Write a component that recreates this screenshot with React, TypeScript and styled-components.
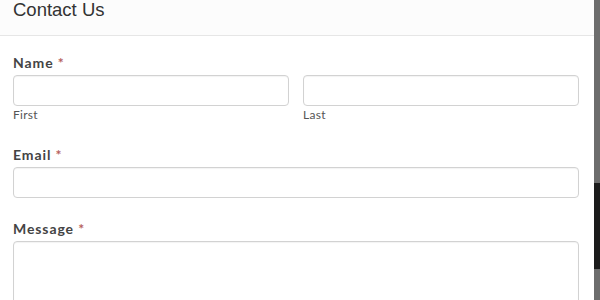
import styled, { createGlobalStyle } from "styled-components";

const GlobalStyle = createGlobalStyle`
  html, body {
    margin: 0;
    padding: 0;
    background: #ffffff;
    overflow: hidden;
  }
  * {
    box-sizing: border-box;
  }
`;

const App = () => {
  return (
    <>
      <GlobalStyle />
      <Screen>
        <Modal>
          <Header>
            <Title>Contact Us</Title>
          </Header>

          <Form>
            <Field>
              <Label>
                Name <Required>*</Required>
              </Label>
              <NameRow>
                <Column>
                  <Input type="text" />
                  <SubLabel>First</SubLabel>
                </Column>
                <Column>
                  <Input type="text" />
                  <SubLabel>Last</SubLabel>
                </Column>
              </NameRow>
            </Field>

            <Field>
              <Label>
                Email <Required>*</Required>
              </Label>
              <Input type="email" />
            </Field>

            <Field>
              <Label>
                Message <Required>*</Required>
              </Label>
              <TextArea />
            </Field>
          </Form>
        </Modal>

        <ScrollTrack>
          <ScrollThumb />
        </ScrollTrack>
      </Screen>
    </>
  );
};

export default App;

//STYLED

const Screen = styled.div`
  display: flex;
  width: 600px;
  height: 300px;
  overflow: hidden;
`;

const Modal = styled.section`
  flex: 1;
  display: flex;
  flex-direction: column;
  background: #fff;
  overflow: hidden;
`;

const Header = styled.header`
  flex-shrink: 0;
  height: 36px;
  padding: 0 13px;
  background: #fcfcfc;
  border-bottom: 1px solid #e6e6e6;
`;

const Title = styled.h2`
  margin: 0;
  font-family: "Liberation Sans", Arial, sans-serif;
  font-size: 18.5px;
  line-height: 20px;
  font-weight: 400;
  color: #333;
`;

const Form = styled.form`
  flex-shrink: 0;
  display: flex;
  flex-direction: column;
  gap: 22px;
  padding: 18px 15px 0 13px;
`;

const Field = styled.div`
  display: flex;
  flex-direction: column;
`;

const Label = styled.label`
  font-family: Lato, "Open Sans", sans-serif;
  font-size: 14px;
  line-height: 17px;
  font-weight: 700;
  letter-spacing: 0.9px;
  color: #444;
  margin-bottom: 4px;
`;

const Required = styled.span`
  color: #b6615d;
`;

const NameRow = styled.div`
  display: grid;
  grid-template-columns: 1fr 1fr;
  gap: 14px;
`;

const Column = styled.div`
  display: flex;
  flex-direction: column;
`;

const Input = styled.input`
  width: 100%;
  height: 31px;
  padding: 4px 8px;
  border: 1px solid #d2d2d2;
  border-radius: 4px;
  background: #fff;
  box-shadow: inset 0 1px 1px rgba(0, 0, 0, 0.05);
  font-family: Lato, sans-serif;
  font-size: 13px;
  outline: none;
`;

const SubLabel = styled.span`
  font-family: Lato, "Open Sans", sans-serif;
  font-size: 12px;
  line-height: 18px;
  letter-spacing: 0.3px;
  color: #555;
`;

const TextArea = styled.textarea`
  flex-shrink: 0;
  width: 100%;
  height: 110px;
  padding: 6px 8px;
  border: 1px solid #d2d2d2;
  border-radius: 4px;
  background: #fff;
  box-shadow: inset 0 1px 1px rgba(0, 0, 0, 0.05);
  resize: none;
  outline: none;
`;

const ScrollTrack = styled.aside`
  width: 6px;
  height: 100%;
  padding-top: 183px;
  background: #6d6d6d;
`;

const ScrollThumb = styled.div`
  height: 86px;
  background: #1c1c1c;
`;
